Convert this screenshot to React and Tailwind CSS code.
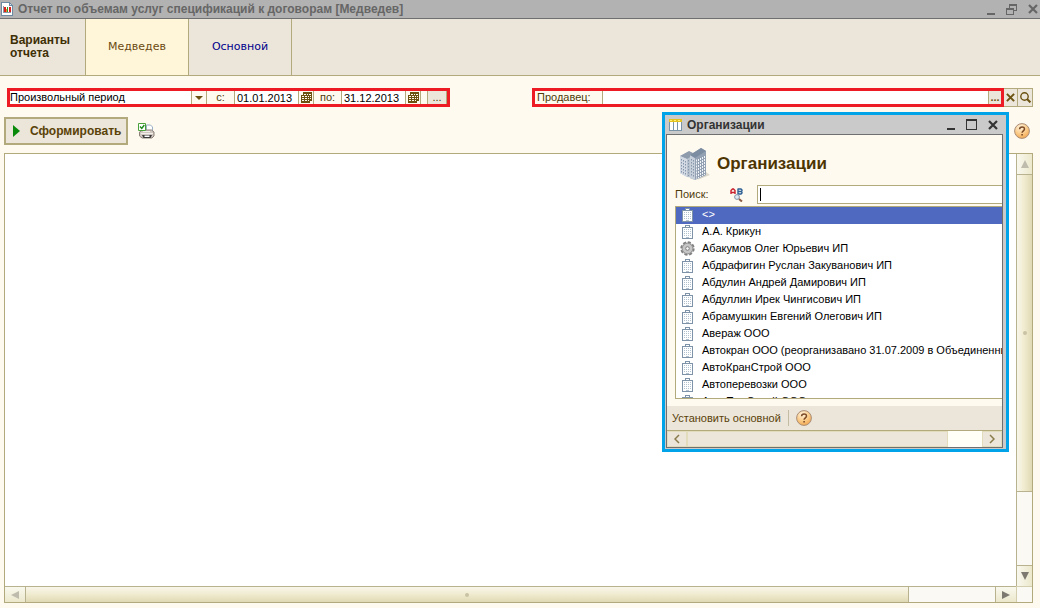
import React, { useState } from "react";

const variants = ["Медведев", "Основной"];

const organizations = [
    { name: "<>", kind: "company" },
    { name: "А.А. Крикун", kind: "company" },
    { name: "Абакумов Олег Юрьевич ИП", kind: "service" },
    { name: "Абдрафигин Руслан Закуванович ИП", kind: "company" },
    { name: "Абдулин Андрей Дамирович ИП", kind: "company" },
    { name: "Абдуллин Ирек Чингисович ИП", kind: "company" },
    { name: "Абрамушкин Евгений Олегович ИП", kind: "company" },
    { name: "Авераж ООО", kind: "company" },
    { name: "Автокран ООО (реорганизавано 31.07.2009 в Объединенные", kind: "company" },
    { name: "АвтоКранСтрой ООО", kind: "company" },
    { name: "Автоперевозки ООО", kind: "company" },
    { name: "АвтоПлоСтрой ООО", kind: "company" },
];

const ReportIcon = () => (
    <svg width="12" height="14" viewBox="0 0 12 14" shapeRendering="crispEdges">
        <path d="M0 0h9v1h1v1h1v1h1v11H0z" fill="#6d8aa3" />
        <path d="M1 1h7v3h3v9H1z" fill="#fff" />
        <path d="M9 2h1v1H9z" fill="#dfe8ef" />
        <path d="M2 4h1v6h7v1H2z" fill="#8b9aa8" />
        <path d="M3 5h2v5H3z" fill="#d8201c" />
        <path d="M5 7h1v3H5z" fill="#e88a2c" />
        <path d="M6 5h1v5H6z" fill="#2a9a2a" />
        <path d="M8 5h2v5H8z" fill="#d8201c" />
    </svg>
);

const MinimizeIcon = () => (
    <svg width="8" height="11" viewBox="0 0 8 11" shapeRendering="crispEdges">
        <path d="M0 9h8v2H0z" fill="currentColor" />
    </svg>
);

const RestoreIcon = () => (
    <svg width="11" height="11" viewBox="0 0 11 11" shapeRendering="crispEdges">
        <path d="M3 0h8v7H8V6h2V2H4v2H3z" fill="currentColor" />
        <path d="M0 4h8v7H0zM1 6v4h6V6z" fill="currentColor" fillRule="evenodd" />
    </svg>
);

const MaximizeIcon = () => (
    <svg width="11" height="11" viewBox="0 0 11 11" shapeRendering="crispEdges">
        <path d="M0 0h11v11H0zM1 2v8h9V2z" fill="currentColor" fillRule="evenodd" />
    </svg>
);

const CrossIcon = ({ size = 10 }) => (
    <svg width={size} height={size} viewBox="0 0 10 10">
        <path d="M1 1l8 8M9 1l-8 8" stroke="currentColor" strokeWidth="2.2" />
    </svg>
);

const CalendarIcon = () => (
    <svg width="11" height="11" viewBox="0 0 11 11" shapeRendering="crispEdges">
        <path d="M2 0h9v9h-2v2H0V3h2z" fill="#6b5210" />
        <path d="M3 2h2v1H3zM6 2h1v1H6zM8 2h2v1H8zM1 4h2v1H1zM4 4h2v1H4zM7 4h1v1H7zM9 4h1v1H9zM1 6h2v1H1zM4 6h2v1H4zM7 6h1v1H7zM9 6h1v1H9zM1 8h2v1H1zM4 8h2v1H4zM7 8h1v1H7z" fill="#fffaf0" />
    </svg>
);

const SearchIcon = () => (
    <svg width="11" height="11" viewBox="0 0 11 11">
        <circle cx="4.5" cy="4.5" r="3.7" fill="none" stroke="#6b5210" strokeWidth="1.4" />
        <path d="M7 7l3.4 3.4" stroke="#6b5210" strokeWidth="2" />
    </svg>
);

const PrinterIcon = () => (
    <svg width="17" height="16" viewBox="0 0 17 16">
        <path d="M8.500 2h4l2 2v4h-6z" fill="#fff" stroke="#9bb0c4" />
        <path d="M1.500 9l3-2h9l2.500 2v4l-2 2H4l-2.500-2z" fill="#d0c7c0" stroke="#8c827a" />
        <path d="M5 8.500h7M3 10.500h12" stroke="#f2eeea" />
        <path d="M4 12h10l-1.500 3h-7z" fill="#3c3a3a" />
        <path d="M6.500 12.500h5V14h-5z" fill="#fff" />
        <path d="M0.5 0.5h7v7h-7z" fill="#fff" stroke="#4ba23c" />
        <path d="M2 3.5l1.8 2L6.3 2" fill="none" stroke="#1d8a1d" strokeWidth="1.4" />
    </svg>
);

const HelpIcon = () => (
    <svg width="16" height="16" viewBox="0 0 16 16">
        <defs>
            <radialGradient id="help" cx="0.4" cy="0.25" r="0.8">
                <stop offset="0" stopColor="#fff3dd" />
                <stop offset="0.5" stopColor="#fbcf90" />
                <stop offset="1" stopColor="#f3a54c" />
            </radialGradient>
        </defs>
        <circle cx="8" cy="8" r="7.4" fill="url(#help)" stroke="#a98e78" />
        <path d="M5.6 6.2C5.6 3.2 10.5 3.2 10.5 6c0 1.8-2.4 1.8-2.4 3.8" fill="none" stroke="#7b4a26" strokeWidth="1.5" />
        <path d="M7.3 11h1.6v1.6H7.3z" fill="#7b4a26" />
    </svg>
);

const TableIcon = () => (
    <svg width="13" height="12" viewBox="0 0 13 12" shapeRendering="crispEdges">
        <path d="M0 0h13v12H0z" fill="#7b93a6" />
        <path d="M1 3h3v8H1zM5 3h3v8H5zM9 3h3v8H9z" fill="#fff" />
        <path d="M0 0h13v3H0z" fill="#e3c11e" />
        <path d="M1 1h2v1H1zM5 1h2v1H5zM9 1h2v1H9z" fill="#fff07a" />
    </svg>
);

const BuildingsIcon = () => (
    <svg width="32" height="34" viewBox="0 0 32 34">
        <path d="M18 33l13-5-4-3z" fill="#dcd8cc" />
        <path d="M1 9l9-4 6 2v24l-8-1-7-4z" fill="#b9c3d0" />
        <path d="M1 9l9-5 6 3-8 5z" fill="#8d9bad" />
        <path d="M1 9l7 3v18l-7-4z" fill="#d3dae3" />
        <path d="M11 8l11-7 5 3v24l-11 5-5-2z" fill="#93a1b3" />
        <path d="M11 8l5 3v22l-5-2z" fill="#c6cfda" />
        <path d="M11 8l11-7 5 3-11 7z" fill="#7d8da1" />
        <path d="M17.5 12.500v19M19.5 12v19M21.5 11v19M23.5 10v19M25.5 9v19" stroke="#f0f4f8" strokeDasharray="2 1" />
        <path d="M2.5 12v14M4.5 13v14M6.5 14v14M9.500 13v16M12.5 12v18M14.5 13v18" stroke="#8596aa" strokeDasharray="1.500 1.500" />
    </svg>
);

const FindIcon = () => (
    <svg width="14" height="14" viewBox="0 0 14 14">
        <path d="M1 6V2.5L2.5 1h1L5 2.5V6M1 4.5h4" fill="none" stroke="#c8202c" strokeWidth="1.4" />
        <path d="M8 1v5h3l1-1V4.5l-1-1H8M11 3.5l1-.7V2l-1-1H7.5" fill="none" stroke="#2c5f94" strokeWidth="1.4" />
        <circle cx="7" cy="9" r="2.4" fill="#dfe9f2" stroke="#8294a8" />
        <path d="M9 11l3 2.500" stroke="#8b5a45" strokeWidth="2" />
    </svg>
);

const CompanyIcon = () => (
    <svg width="11" height="14" viewBox="0 0 11 14" shapeRendering="crispEdges">
        <path d="M3 0h5v2h3v12H0V2h3z" fill="#7f93a8" />
        <path d="M4 1h3v1H4zM1 3h9v10H1z" fill="#fdfeff" />
        <path d="M2 4h1v1H2zM4 4h1v1H4zM6 4h1v1H6zM8 4h1v1H8zM2 6h1v1H2zM4 6h1v1H4zM6 6h1v1H6zM8 6h1v1H8zM2 8h1v1H2zM4 8h1v1H4zM6 8h1v1H6zM8 8h1v1H8zM2 10h1v1H2zM4 10h1v1H4zM6 10h1v1H6zM8 10h1v1H8zM4 12h3v1H4z" fill="#b3c1cf" />
    </svg>
);

const GearIcon = () => (
    <svg width="15" height="15" viewBox="0 0 15 15">
        <circle cx="7.5" cy="7.5" r="6.2" fill="#c9c9c9" stroke="#808080" strokeWidth="2" strokeDasharray="3 1.8" />
        <circle cx="7.5" cy="7.5" r="5.2" fill="#c6c6c6" stroke="#979797" />
        <circle cx="7.5" cy="7.5" r="1.8" fill="#f8f8f8" stroke="#808080" />
    </svg>
);

const Triangle = ({ d, dark }) => (
    <svg width="8" height="8" viewBox="0 0 8 8">
        <path d={d} fill={dark ? "#7d7970" : "#bfbcae"} />
    </svg>
);

const TitleBar = () => (
    <header className="flex h-[19px] items-center border-b border-[#6f6f6f] bg-[#b2b2b2] pl-px text-[#666]">
        <ReportIcon />
        <h1 className="ml-[5px] flex-1 text-xs font-bold">
            Отчет по объемам услуг спецификаций к договорам [Медведев]
        </h1>
        <div className="flex items-center gap-[11px] pr-0.5">
            <button type="button" aria-label="Свернуть"><MinimizeIcon /></button>
            <button type="button" aria-label="Восстановить"><RestoreIcon /></button>
            <button type="button" aria-label="Закрыть"><CrossIcon /></button>
        </div>
    </header>
);

const VariantTabs = ({ active, onChange }) => (
    <nav className="flex h-[57px] border-b border-[#b2a97c] bg-[#ebe5da]">
        <div className="flex w-[86px] items-center border-r border-[#b2a97c] pl-[10px] text-xs leading-[13px] font-bold text-[#3f2f05]">
            Варианты
            <br />
            отчета
        </div>
        {variants.map((name) => (
            <button
                key={name}
                type="button"
                onClick={() => onChange(name)}
                className={`w-[103px] border-r border-[#b2a97c] font-['DejaVu_Sans'] text-[11px] ${
                    active === name ? "bg-[#fff6d9] text-[#6a4a10]" : "text-[#00008b]"
                }`}
            >
                {name}
            </button>
        ))}
    </nav>
);

const DateField = ({ id, label, value, onChange }) => (
    <>
        <label htmlFor={id} className="w-[27px] text-center text-[#4d3b0a]">{label}</label>
        <input
            id={id}
            type="text"
            value={value}
            onChange={(e) => onChange(e.target.value)}
            className="h-full w-16 border-l border-[#b2a97c] bg-white pl-0.5 text-black outline-none"
        />
        <button
            type="button"
            aria-label="Календарь"
            className="flex h-full w-4 items-center justify-center border-x border-[#b2a97c] bg-[#fffaf0]"
        >
            <CalendarIcon />
        </button>
    </>
);

const Filters = () => {
    const [from, setFrom] = useState("01.01.2013");
    const [to, setTo] = useState("31.12.2013");
    const [seller, setSeller] = useState("");

    return (
        <div className="flex px-[7px]">
            <div className="flex h-[19px] w-[443px] items-center border-3 border-[#ed1c24]">
                <div className="relative flex h-full w-[197px] items-center border-r border-[#b2a97c] bg-white">
                    <select
                        aria-label="Период"
                        className="h-full w-full appearance-none bg-white leading-[13px] text-black outline-none"
                    >
                        <option>Произвольный период</option>
                    </select>
                    <span className="pointer-events-none absolute inset-y-0 right-0 flex w-[15px] items-center justify-center border-l border-[#b2a97c] bg-[#fffaf0]">
                        <svg width="8" height="4" viewBox="0 0 8 4">
                            <path d="M0 0h8L4 4z" fill="#6b5210" />
                        </svg>
                    </span>
                </div>
                <DateField id="from" label="с:" value={from} onChange={setFrom} />
                <DateField id="to" label="по:" value={to} onChange={setTo} />
                <button
                    type="button"
                    aria-label="Выбрать период"
                    className="ml-auto h-full w-5 border-x border-[#b2a97c] bg-[#ebe5da] leading-[13px] text-[#4d3b0a]"
                >
                    ...
                </button>
            </div>

            <div className="ml-[82px] flex h-[19px] flex-1 items-center border-3 border-[#ed1c24]">
                <label htmlFor="seller" className="w-[67px] pl-0.5 text-[#4d3b0a]">Продавец:</label>
                <input
                    id="seller"
                    type="text"
                    value={seller}
                    onChange={(e) => setSeller(e.target.value)}
                    className="h-full min-w-0 flex-1 border-l border-[#b2a97c] bg-white outline-none"
                />
                <button
                    type="button"
                    aria-label="Выбрать продавца"
                    className="h-full w-[13px] border-l border-[#b2a97c] bg-[#ebe5da] leading-[13px] font-bold text-[#6b5210]"
                >
                    ...
                </button>
            </div>
            <button
                type="button"
                aria-label="Очистить"
                className="flex h-[19px] w-[14px] items-center justify-center border-y border-r border-[#b2a97c] bg-[#ebe5da] text-[#6b5210]"
            >
                <CrossIcon size={9} />
            </button>
            <button
                type="button"
                aria-label="Открыть"
                className="flex h-[19px] w-[15px] items-center justify-center border-y border-r border-[#b2a97c] bg-[#ebe5da]"
            >
                <SearchIcon />
            </button>
        </div>
    );
};

const Toolbar = () => (
    <div className="mt-[10px] flex items-center px-1">
        <button
            type="button"
            className="flex h-7 w-[124px] items-center border-2 border-[#b2a97c] bg-[#ebe5da] pl-[7px] text-xs font-bold text-[#5a4208]"
        >
            <svg width="7" height="12" viewBox="0 0 7 12">
                <path d="M0 0l7 6-7 6z" fill="#0a8a0a" />
            </svg>
            <span className="ml-[10px]">Сформировать</span>
        </button>
        <button type="button" aria-label="Печать" className="ml-[10px]">
            <PrinterIcon />
        </button>
        <button type="button" aria-label="Справка" className="mr-[6px] ml-auto">
            <HelpIcon />
        </button>
    </div>
);

const Sheet = () => (
    <div className="mt-2 mr-[7px] mb-[5px] ml-1 grid flex-1 grid-cols-[1fr_16px] grid-rows-[1fr_16px] border border-[#b2a97c] bg-white">
        <div />
        <div className="flex flex-col border-l border-[#b9b28e] bg-[#faf9f3]">
            <div className="flex h-[21px] items-center justify-center border-b border-[#b9b28e] bg-linear-to-r from-[#f9f8ee] to-[#ece8cc]">
                <Triangle d="M4 0l4 8H0z" />
            </div>
            <div className="flex h-[317px] items-center justify-center border-b border-[#b9b28e] bg-linear-to-r from-[#f8f6ea] via-[#f0ebcf] to-[#e0d9b4]">
                <span className="size-1 rounded-full bg-[#c9c3a4]" />
            </div>
            <div className="mt-auto flex h-[21px] items-center justify-center border-t border-[#b9b28e] bg-linear-to-r from-[#f9f8ee] to-[#ece8cc]">
                <Triangle d="M0 0h8L4 8z" dark />
            </div>
        </div>
        <div className="flex border-t border-[#b9b28e] bg-[#faf9f3]">
            <div className="flex w-[21px] items-center justify-center border-r border-[#b9b28e] bg-linear-to-b from-[#f9f8ee] to-[#ece8cc]">
                <Triangle d="M8 0v8L0 4z" />
            </div>
            <div className="flex w-[883px] items-center justify-center border-r border-[#b9b28e] bg-linear-to-b from-[#f8f6ea] via-[#f0ebcf] to-[#e0d9b4]">
                <span className="size-1 rounded-full bg-[#c9c3a4]" />
            </div>
            <div className="ml-auto flex w-[21px] items-center justify-center border-l border-[#b9b28e] bg-linear-to-b from-[#f9f8ee] to-[#ece8cc]">
                <Triangle d="M0 0l8 4-8 4z" dark />
            </div>
        </div>
        <div className="border-t border-l border-[#d3ceae] bg-[#faf9f3]" />
    </div>
);

const OrganizationsDialog = () => {
    const [selected, setSelected] = useState(0);
    const [query, setQuery] = useState("");

    return (
        <section className="absolute top-[112px] right-[31px] w-[347px] border-3 border-[#00a2e8] bg-[#cacaca] pr-[3px] pb-px pl-px">
            <div className="flex h-[19px] items-center pl-[3px] text-[#333]">
                <TableIcon />
                <h2 className="ml-[5px] flex-1 text-xs font-bold">Организации</h2>
                <div className="flex items-center gap-[11px] pr-[5px]">
                    <button type="button" aria-label="Свернуть"><MinimizeIcon /></button>
                    <button type="button" aria-label="Развернуть"><MaximizeIcon /></button>
                    <button type="button" aria-label="Закрыть"><CrossIcon /></button>
                </div>
            </div>

            <div className="border border-[#6f6f6f] bg-[#fffaf0]">
                <div className="flex h-[50px] items-center pt-2 pl-3">
                    <BuildingsIcon />
                    <h3 className="ml-[6px] text-[17px] font-bold text-[#4d3503]">Организации</h3>
                </div>

                <div className="flex items-center pl-2">
                    <label htmlFor="search" className="w-[55px] text-[#4d3b0a]">Поиск:</label>
                    <FindIcon />
                    <div className="ml-[13px] flex h-[19px] min-w-0 flex-1 items-center border-y border-l border-[#b2a97c] bg-white pl-0.5">
                        {query === "" && <span className="h-[13px] w-px bg-black" />}
                        <input
                            id="search"
                            type="text"
                            value={query}
                            onChange={(e) => setQuery(e.target.value)}
                            className="h-full min-w-0 flex-1 bg-white text-black outline-none"
                        />
                    </div>
                </div>

                <ul className="mt-0.5 ml-2 h-[193px] overflow-hidden border-y border-l border-[#b2a97c] bg-white text-black">
                    {organizations.map((org, i) => (
                        <li key={org.name}>
                            <button
                                type="button"
                                onClick={() => setSelected(i)}
                                className={`flex h-[17px] w-full items-center pb-0.5 whitespace-nowrap ${
                                    selected === i ? "bg-[#5069c0] text-white" : ""
                                }`}
                            >
                                <span className="flex w-[26px] shrink-0 justify-center pr-1">
                                    {org.kind === "service" ? <GearIcon /> : <CompanyIcon />}
                                </span>
                                {org.name}
                            </button>
                        </li>
                    ))}
                </ul>

                <div className="mt-[7px] flex h-[25px] items-center border-b border-[#b2a97c] bg-[#ebe5da] pl-[5px] text-[#5a4208]">
                    <button type="button">Установить основной</button>
                    <span className="mx-[7px] h-4 w-px bg-[#c4bda4]" />
                    <button type="button" aria-label="Справка"><HelpIcon /></button>
                </div>

                <div className="flex h-4 bg-[#fffff8] text-[#8a7b4a]">
                    <div className="flex w-5 items-center justify-center border border-[#e2dcbc] bg-[#ebe5da]">
                        <svg width="6" height="10" viewBox="0 0 6 10">
                            <path d="M5 1L1 5l4 4" fill="none" stroke="currentColor" strokeWidth="1.5" />
                        </svg>
                    </div>
                    <div className="w-[261px] border border-[#e2dcbc] bg-[#ebe5da]" />
                    <div className="ml-auto flex w-5 items-center justify-center border border-[#e2dcbc] bg-[#ebe5da]">
                        <svg width="6" height="10" viewBox="0 0 6 10">
                            <path d="M1 1l4 4-4 4" fill="none" stroke="currentColor" strokeWidth="1.5" />
                        </svg>
                    </div>
                </div>
            </div>
        </section>
    );
};

const App = () => {
    const [variant, setVariant] = useState("Медведев");

    return (
        <main className="relative flex min-h-screen flex-col bg-[#fffaf0] font-['Liberation_Sans',Arial,sans-serif] text-[11px]">
            <TitleBar />
            <VariantTabs active={variant} onChange={setVariant} />
            <div className="mt-3">
                <Filters />
            </div>
            <Toolbar />
            <Sheet />
            <OrganizationsDialog />
        </main>
    );
};

export default App;
